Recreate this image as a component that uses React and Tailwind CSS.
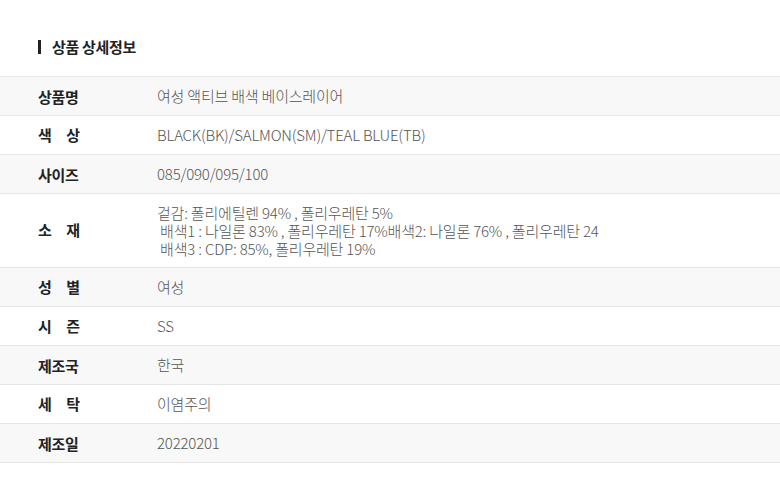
import React from "react";

const rows = [
  { label: ["상품명"], value: ["여성 액티브 배색 베이스레이어"], gray: true },
  { label: ["색", "상"], value: ["BLACK(BK)/SALMON(SM)/TEAL BLUE(TB)"] },
  { label: ["사이즈"], value: ["085/090/095/100"], gray: true },
  {
    label: ["소", "재"],
    value: [
      "겉감: 폴리에틸렌 94% , 폴리우레탄 5%",
      "\u00a0배색1 : 나일론 83% , 폴리우레탄 17%배색2: 나일론 76% , 폴리우레탄 24",
      "\u00a0배색3 : CDP: 85%, 폴리우레탄 19%",
    ],
    tall: true,
  },
  { label: ["성", "별"], value: ["여성"], gray: true },
  { label: ["시", "즌"], value: ["SS"] },
  { label: ["제조국"], value: ["한국"], gray: true },
  { label: ["세", "탁"], value: ["이염주의"] },
  { label: ["제조일"], value: ["20220201"], gray: true },
];

export default function App() {
  return (
    <div
      className="w-[780px] h-[502px] bg-white overflow-hidden"
      style={{ fontFamily: '"Noto Sans CJK KR", "Noto Sans", sans-serif' }}
    >
      <div className="h-[76px] flex items-center pl-[38px] pt-[18px]">
        <span className="w-[3px] h-[14px] bg-[#222] mr-[11px]" />
        <span className="text-[15px] font-bold text-[#222] tracking-[-0.3px]">상품 상세정보</span>
      </div>
      <div className="border-t border-[#e6e6e6]">
        {rows.map((r, i) => (
          <div
            key={i}
            className={`flex items-center border-b border-[#e6e6e6] ${r.tall ? "h-[74px]" : "h-[39px]"} ${r.gray ? "bg-[#f8f8f8]" : "bg-white"}`}
          >
            <div className="w-[157px] pl-[38px] shrink-0">
              {r.label.length === 1 ? (
                <span className="text-[15px] font-bold text-[#222] tracking-[-0.3px]">{r.label[0]}</span>
              ) : (
                <span className="flex justify-between w-[42px] text-[15px] font-bold text-[#222]">
                  <span>{r.label[0]}</span>
                  <span>{r.label[1]}</span>
                </span>
              )}
            </div>
            <div className="text-[15px] font-light text-[#555] leading-[18px] tracking-[-0.2px] whitespace-pre">
              {r.value.map((v, j) => (
                <div key={j}>{v}</div>
              ))}
            </div>
          </div>
        ))}
      </div>
    </div>
  );
}
